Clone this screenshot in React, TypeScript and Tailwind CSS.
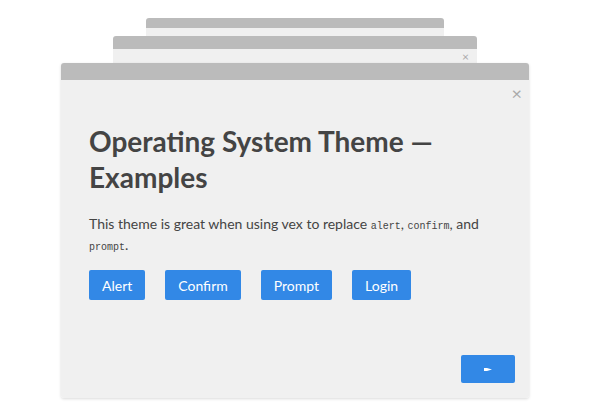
import React from "react";

const buttons = ["Alert", "Confirm", "Prompt", "Login"];

export default function App() {
  return (
    <div
      className="w-[590px] h-[410px] bg-white flex flex-col items-center pt-[18px] overflow-hidden"
      style={{ fontFamily: "Lato, 'Open Sans', sans-serif" }}
    >
      {/* back window */}
      <div className="w-[298px] h-[18px] flex flex-col rounded-t-[3px] overflow-hidden">
        <div className="h-[10px] bg-[#bbbbbb]" />
        <div className="flex-1 bg-[#f0f0f0]" />
      </div>

      {/* middle window */}
      <div className="w-[364px] h-[27px] flex flex-col rounded-t-[3px] overflow-hidden">
        <div className="h-[13px] bg-[#bbbbbb]" />
        <div className="flex-1 bg-[#f0f0f0] flex justify-end items-start pr-[8px] pt-[2px]">
          <span className="text-[12px] leading-[12px] text-[#aaaaaa]">×</span>
        </div>
      </div>

      {/* front window */}
      <div className="w-[468px] h-[335px] flex flex-col rounded-[3px] overflow-hidden shadow-[0_1px_3px_rgba(0,0,0,0.15)]">
        <div className="h-[17px] bg-[#bbbbbb]" />
        <div className="flex-1 bg-[#f0f0f0] flex flex-col px-[28px]">
          <div className="flex justify-end -mr-[21px] pt-[4px]">
            <span className="text-[18px] leading-[18px] text-[#aaaaaa]">×</span>
          </div>
          <h1 className="mt-[21px] text-[28px] leading-[36px] font-bold text-[#444444]">
            Operating System Theme — Examples
          </h1>
          <p className="mt-[18px] text-[14px] leading-[21px] text-[#444444] pr-[20px]">
            This theme is great when using vex to replace{" "}
            <code className="text-[10px] leading-[10px]" style={{ fontFamily: "'Liberation Mono', monospace" }}>alert</code>,{" "}
            <code className="text-[10px] leading-[10px]" style={{ fontFamily: "'Liberation Mono', monospace" }}>confirm</code>, and{" "}
            <code className="text-[10px] leading-[10px]" style={{ fontFamily: "'Liberation Mono', monospace" }}>prompt</code>.
          </p>
          <div className="mt-[15px] flex gap-[20px]">
            {buttons.map((b) => (
              <button
                key={b}
                className="h-[30px] px-[13px] rounded-[2px] bg-[#3288e6] text-white text-[14px]"
              >
                {b}
              </button>
            ))}
          </div>
          <div className="flex-1" />
          <div className="flex justify-end -mr-[14px] mb-[15px]">
            <button className="w-[54px] h-[28px] rounded-[2px] bg-[#3288e6] flex items-center justify-center">
              <svg width="8" height="5" viewBox="0 0 8 5">
                <path d="M0 1h3l5 1.5-5 1.5H0z" fill="white" />
              </svg>
            </button>
          </div>
        </div>
      </div>
    </div>
  );
}
